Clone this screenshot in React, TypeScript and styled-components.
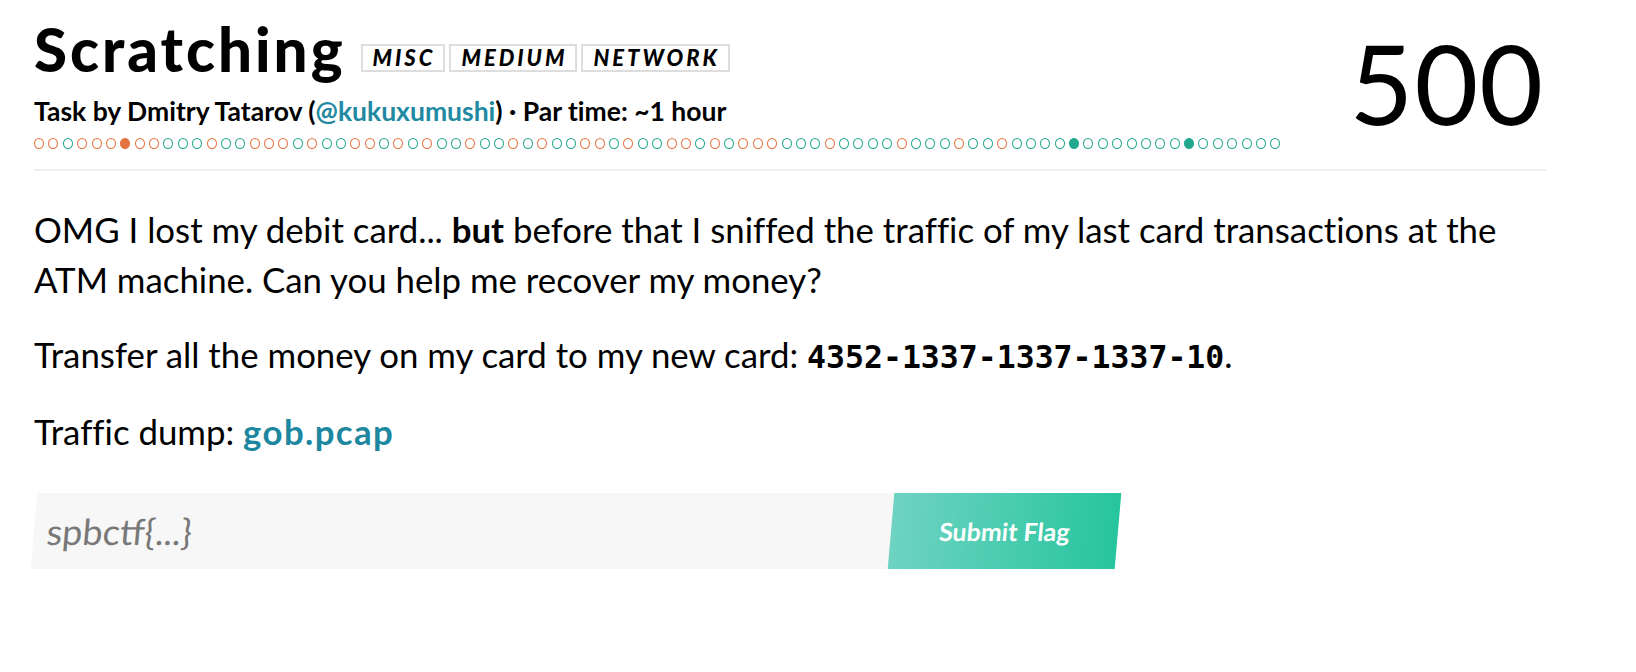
import React from "react";
import styled, { createGlobalStyle } from "styled-components";

const GlobalStyle = createGlobalStyle`
  html, body {
    margin: 0;
    padding: 0;
    background: #ffffff;
  }
  body {
    font-family: Lato, "Open Sans", "Noto Sans", sans-serif;
    color: #000;
    font-variant-ligatures: no-common-ligatures;
  }
  * { box-sizing: border-box; }
`;

const Page = styled.div`
  padding: 19px 90px 40px 34px;
  width: 1636px;
`;

const Header = styled.header`
  display: flex;
  justify-content: space-between;
  align-items: flex-start;
`;

const HeaderMain = styled.div`
  display: flex;
  flex-direction: column;
`;

const TitleRow = styled.div`
  display: flex;
  align-items: flex-end;
  gap: 15px;
`;

const Title = styled.h1`
  margin: 0;
  font-size: 60px;
  line-height: 1;
  font-weight: 900;
  letter-spacing: 3px;
`;

const Tags = styled.div`
  display: flex;
  gap: 4px;
  margin-bottom: 7px;
`;

const Tag = styled.span`
  display: inline-flex;
  align-items: center;
  height: 28px;
  padding: 0 8px 0 10px;
  border: 2px solid #dddddd;
  font-size: 22px;
  font-weight: 900;
  font-style: italic;
  letter-spacing: 3px;
  line-height: 1;
`;

const Meta = styled.div`
  margin-top: 17px;
  font-size: 26.5px;
  line-height: 1.2;
  font-weight: 700;
`;

const MetaLink = styled.span`
  color: #2189a2;
`;

const Dots = styled.div`
  display: flex;
  gap: 4.38px;
  margin-top: 10px;
  height: 11px;
`;

type DotKind = "o" | "t" | "O" | "T";

const Dot = styled.span<{ $kind: DotKind }>`
  display: block;
  flex: none;
  width: 10px;
  height: 11px;
  border-radius: 50%;
  border: 1.6px solid
    ${(p) => (p.$kind === "o" || p.$kind === "O" ? "#e4743f" : "#22a88e")};
  background: ${(p) =>
    p.$kind === "O" ? "#e4743f" : p.$kind === "T" ? "#22a88e" : "transparent"};
`;

const Points = styled.div`
  margin-top: 8px;
  margin-right: 2px;
  font-size: 110px;
  line-height: 1;
  font-weight: 400;
  letter-spacing: 1px;
`;

const Divider = styled.hr`
  margin: 20px 0 0;
  border: none;
  height: 2px;
  background: #f0f0f0;
`;

const Description = styled.div`
  margin-top: 34px;
  display: flex;
  flex-direction: column;
  gap: 25px;
`;

const Para = styled.p`
  margin: 0;
  font-size: 34.8px;
  line-height: 50px;
  font-weight: 400;
`;

const Strong = styled.b`
  font-weight: 700;
`;

const Code = styled.code`
  font-family: "DejaVu Sans Mono", "Liberation Mono", monospace;
  font-weight: 700;
  font-size: 31.5px;
`;

const FileLink = styled.a`
  color: #1d87a0;
  font-weight: 700;
  text-decoration: none;
  letter-spacing: 1.4px;
`;

const FlagForm = styled.form`
  margin-top: 36px;
  display: flex;
  width: 1084px;
  height: 76px;
  transform: skewX(-5deg);
`;

const FlagInput = styled.input`
  flex: 1;
  min-width: 0;
  border: none;
  outline: none;
  background: #f7f7f7;
  padding: 0 13px;
  font-family: Lato, "Open Sans", sans-serif;
  font-size: 36px;
  color: #333;
  &::placeholder {
    color: #787878;
  }
`;

const SubmitButton = styled.button`
  width: 227px;
  border: none;
  background: linear-gradient(90deg, #6fd3c2 0%, #26c59d 100%);
  color: #ffffff;
  font-family: Lato, "Open Sans", sans-serif;
  font-size: 25px;
  font-weight: 700;
  cursor: pointer;
  padding: 0;
`;

const dotPattern =
  "ootoooOoottto" +
  "ttooo" +
  "tottoo" +
  "tototto" +
  "tto" +
  "tottootot" +
  "toototooo" +
  "tttotttto" +
  "tttottotttt" +
  "T" +
  "ttttttt" +
  "T" +
  "tttttt";

export default function App() {
  return (
    <>
      <GlobalStyle />
      <Page>
        <Header>
          <HeaderMain>
            <TitleRow>
              <Title>Scratching</Title>
              <Tags>
                <Tag>MISC</Tag>
                <Tag>MEDIUM</Tag>
                <Tag>NETWORK</Tag>
              </Tags>
            </TitleRow>
            <Meta>
              Task by Dmitry Tatarov (<MetaLink>@kukuxumushi</MetaLink>) · Par
              time: ~1 hour
            </Meta>
            <Dots>
              {dotPattern.split("").map((k, i) => (
                <Dot key={i} $kind={k as DotKind} />
              ))}
            </Dots>
          </HeaderMain>
          <Points>500</Points>
        </Header>
        <Divider />
        <Description>
          <Para>
            OMG I lost my debit card... <Strong>but</Strong> before that I
            sniffed the traffic of my last card transactions at the ATM
            machine. Can you help me recover my money?
          </Para>
          <Para>
            Transfer all the money on my card to my new card:{" "}
            <Code>4352-1337-1337-1337-10</Code>.
          </Para>
          <Para>
            Traffic dump: <FileLink href="#">gob.pcap</FileLink>
          </Para>
        </Description>
        <FlagForm onSubmit={(e) => e.preventDefault()}>
          <FlagInput placeholder="spbctf{...}" />
          <SubmitButton type="submit">Submit Flag</SubmitButton>
        </FlagForm>
      </Page>
    </>
  );
}
